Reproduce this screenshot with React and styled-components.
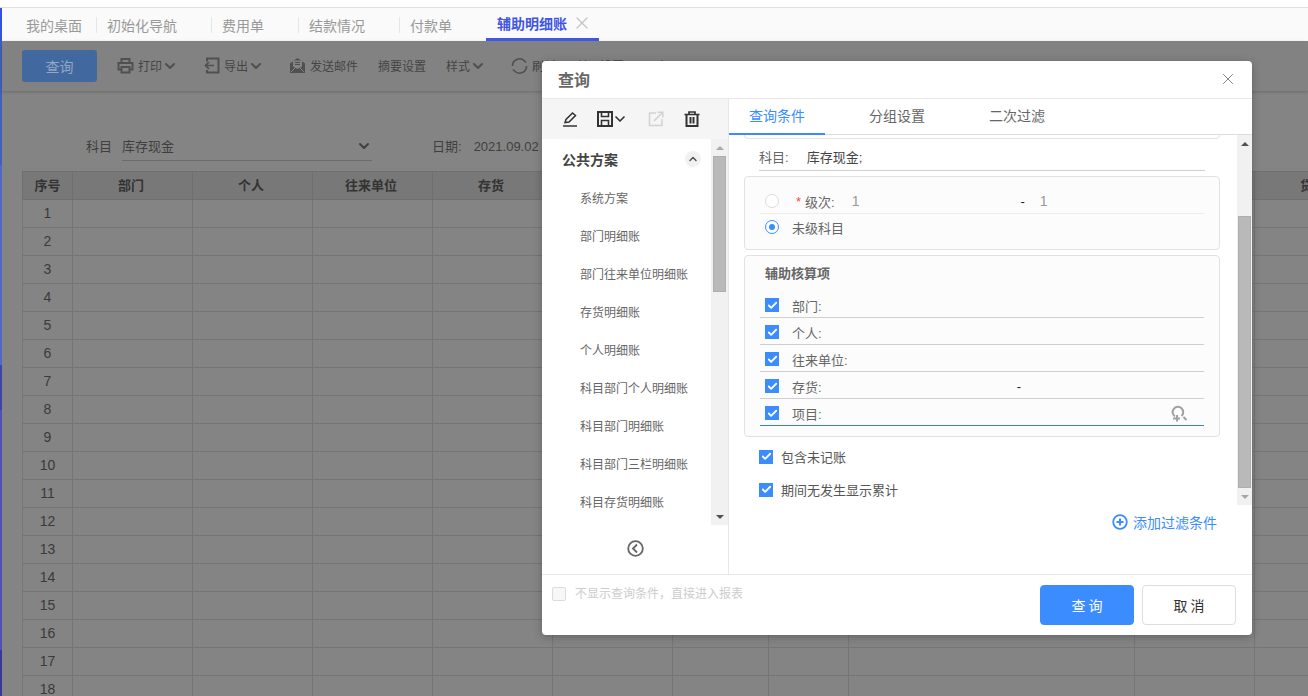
import React from 'react'
import styled, { createGlobalStyle } from 'styled-components'
import { ChevronDown, ChevronUp, X, Check } from 'lucide-react'

const GlobalStyle = createGlobalStyle`
  html, body {
    margin: 0;
    padding: 0;
    height: 100%;
    overflow: hidden;
    background: #fff;
    font-family: "Liberation Sans", "Noto Sans CJK SC", sans-serif;
  }
  * { box-sizing: border-box; }
`

const Page = styled.div`
  position: relative;
  width: 1308px;
  height: 696px;
  overflow: hidden;
  display: flex;
  flex-direction: column;
  padding-left: 2px;
  background: linear-gradient(
    #3355dd 0 41px,
    #4060c0 41px 165px,
    #5068c8 165px 365px,
    #3f44a8 365px 410px,
    #5050b8 410px 650px,
    #38389a 650px
  );
`
const TopEdge = styled.div`
  height: 8px;
  flex: none;
  margin-left: -2px;
  background: #fff;
  border-bottom: 1px solid #e0e0e0;
`
const TabBar = styled.div`
  height: 33px;
  flex: none;
  display: flex;
  background: #fafafa;
`
const Tab = styled.div`
  height: 33px;
  padding: ${p => p.$first ? '0 14px 0 24px' : '0 34px 0 11px'};
  position: relative;
  display: flex;
  align-items: center;
  font-size: 14px;
  color: #999;
  white-space: nowrap;
  &::before {
    content: ${p => p.$first ? 'none' : '""'};
    position: absolute;
    left: 0;
    top: 9px;
    height: 16px;
    width: 1px;
    background: #e6e6e6;
  }
`
const ActiveTab = styled(Tab)`
  padding: 0 11px;
  gap: 6px;
  color: #3f55e4;
  font-weight: 600;
  border-bottom: 3px solid #3f55e4;
  &::before { content: none; }
  svg { color: #c4c4c4; margin: 0 -4px 0 -1px; }
`
const Content = styled.div`
  flex: 1;
  min-height: 0;
  background: #848484;
  display: flex;
  flex-direction: column;
  box-shadow: inset 0 1px 0 #b8b8b8;
`
const Toolbar = styled.div`
  height: 50px;
  flex: none;
  background: #828282;
  box-shadow: 0 1px 3px rgba(0, 0, 0, 0.2);
  display: flex;
  align-items: center;
  padding-left: 20px;
  font-size: 12px;
  color: #454545;
  white-space: nowrap;
`
const QueryBtn = styled.div`
  width: 75px;
  height: 32px;
  border-radius: 3px;
  background: #41689f;
  color: #93a7c4;
  font-size: 14px;
  display: flex;
  align-items: center;
  justify-content: center;
  margin-right: 20px;
  padding-bottom: 1px;
`
const ToolItem = styled.div`
  display: flex;
  align-items: center;
  gap: 4px;
  margin-right: ${p => p.$mr ?? 20}px;
  padding-bottom: 1px;
  svg { flex: none; }
`
const ToolChevron = styled(ChevronDown)`
  margin: 0 1px 0 -4px;
  color: #505050;
`
const FilterRow = styled.div`
  height: 80px;
  flex: none;
  display: flex;
  align-items: flex-start;
  padding: 44px 0 0 84px;
  font-size: 13px;
  color: #3f3f3f;
`
const FilterLabel = styled.span`
  line-height: 24px;
  width: 36px;
`
const SelectBox = styled.div`
  width: 250px;
  height: 26px;
  border-bottom: 1px solid #6c6c6c;
  display: flex;
  align-items: center;
  justify-content: space-between;
  padding: 0 0 4px 0;
  margin-right: 60px;
`
const DateLabel = styled.span`
  line-height: 24px;
  margin-right: 12px;
  white-space: nowrap;
`
const Grid = styled.table`
  border-collapse: collapse;
  table-layout: fixed;
  width: 1352px;
  margin-left: 20px;
  flex: none;
  font-size: 14px;
  color: #333;
  th {
    height: 28px;
    padding: 0 0 2px;
    background: #787878;
    border: 1px solid #6f6f6f;
    font-weight: 700;
    font-size: 13px;
  }
  th:not(:first-child) { padding-right: 3px; }
  td {
    height: 28px;
    padding: 0 0 2px;
    border: 1px solid #757575;
    text-align: center;
    color: #3a3a3a;
    font-size: 14px;
  }
`

const Modal = styled.div`
  position: absolute;
  left: 542px;
  top: 61px;
  width: 710px;
  height: 574px;
  background: #fff;
  border-radius: 4px;
  display: flex;
  flex-direction: column;
  overflow: hidden;
  box-shadow: 0 2px 8px rgba(0, 0, 0, 0.25);
`
const ModalHead = styled.div`
  height: 38px;
  flex: none;
  display: flex;
  align-items: center;
  justify-content: space-between;
  padding: 0 15px 2px 16px;
  border-bottom: 1px solid #e8e8e8;
  font-size: 16px;
  font-weight: 700;
  color: #666;
  svg { color: #808080; }
`
const ModalBody = styled.div`
  flex: 1;
  min-height: 0;
  display: flex;
  border-bottom: 1px solid #e8e8e8;
`
const Side = styled.div`
  width: 187px;
  flex: none;
  display: flex;
  flex-direction: column;
  border-right: 1px solid #e8e8e8;
`
const SideTools = styled.div`
  height: 40px;
  flex: none;
  background: #f5f5f5;
  display: flex;
  align-items: center;
  padding-left: 20px;
  svg { flex: none; }
`
const SideIcon = styled.span`
  display: flex;
  align-items: center;
  margin-right: ${p => p.$mr ?? 0}px;
`
const SaveChevron = styled(ChevronDown)`
  margin-left: -1px;
  color: #333;
`
const SideScroll = styled.div`
  height: 386px;
  flex: none;
  display: flex;
`
const SchemeList = styled.div`
  flex: 1;
  padding: 10px 10px 0 20px;
  overflow: hidden;
`
const SchemeHead = styled.div`
  height: 20px;
  display: flex;
  align-items: center;
  justify-content: space-between;
  font-size: 14px;
  font-weight: 700;
  color: #444;
  margin-bottom: 11px;
`
const CollapseDot = styled.span`
  width: 16px;
  height: 16px;
  border-radius: 50%;
  background: #f1f1f1;
  color: #555;
  display: flex;
  align-items: center;
  justify-content: center;
`
const SchemeItem = styled.div`
  height: 38px;
  line-height: 38px;
  padding-left: 18px;
  font-size: 12px;
  color: #666;
  white-space: nowrap;
`
const ScrollTrack = styled.div`
  width: ${p => p.$w}px;
  flex: none;
  background: #f1f1f1;
  display: flex;
  flex-direction: column;
  align-items: center;
`
const Arrow = styled.span`
  flex: none;
  height: ${p => p.$h}px;
  display: flex;
  align-items: center;
  justify-content: center;
  width: 100%;
  &::after {
    content: "";
    border-left: 4px solid transparent;
    border-right: 4px solid transparent;
    ${p => p.$up ? `border-bottom: 4px solid ${p.$c};` : `border-top: 4px solid ${p.$c};`}
  }
`
const Thumb = styled.div`
  flex: none;
  width: ${p => p.$w}px;
  height: ${p => p.$h}px;
  margin-top: ${p => p.$top}px;
  margin-bottom: auto;
  background: #b9b9b9;
  border: 1px solid #aeaeae;
`
const SideFoot = styled.div`
  flex: 1;
  display: flex;
  align-items: center;
  justify-content: center;
  color: #666;
  padding-bottom: 3px;
`
const Main = styled.div`
  flex: 1;
  min-width: 0;
  display: flex;
  flex-direction: column;
`
const MainTabs = styled.div`
  height: 36px;
  flex: none;
  display: flex;
  border-bottom: 1px solid #dcdcdc;
  font-size: 14px;
  color: #666;
`
const MainTab = styled.div`
  height: 36px;
  padding: 0 20px;
  margin-right: 24px;
  line-height: 35px;
  color: ${p => p.$active ? '#3a8cff' : '#666'};
  border-bottom: ${p => p.$active ? '2px solid #3a8cff' : '0'};
`
const FormWrap = styled.div`
  height: 370px;
  flex: none;
  display: flex;
`
const Form = styled.div`
  flex: 1;
  min-width: 0;
  padding: 0 17px 0 15px;
  overflow: hidden;
  font-size: 13px;
  color: #666;
`
const CutCard = styled.div`
  height: 4px;
  border: 1px solid #e4e4e4;
  border-top: 0;
  border-radius: 0 0 4px 4px;
`
const SubjectLine = styled.div`
  height: 32px;
  margin: 0 15px 5px;
  border-bottom: 1px solid #cfcfcf;
  display: flex;
  align-items: center;
  padding-top: 4px;
  b { font-weight: 400; color: #444; margin-left: 18px; }
`
const Card = styled.div`
  background: #fcfcfc;
  border: 1px solid #e2e2e2;
  border-radius: 4px;
  margin-bottom: 5px;
  height: ${p => p.$h}px;
  padding: ${p => p.$pad};
`
const LevelRow = styled.div`
  height: ${p => p.$h}px;
  display: flex;
  align-items: center;
  padding-left: 5px;
  border-bottom: ${p => p.$line ? '1px solid #ececec' : '0'};
`
const Radio = styled.span`
  width: 14px;
  height: 14px;
  flex: none;
  border-radius: 50%;
  border: 1px solid ${p => p.$on ? '#3a8cff' : '#dcdcdc'};
  background: #fff;
  margin-right: ${p => p.$mr}px;
  display: flex;
  align-items: center;
  justify-content: center;
  &::after {
    content: ${p => p.$on ? '""' : 'none'};
    width: 6px;
    height: 6px;
    border-radius: 50%;
    background: #3a8cff;
  }
`
const Star = styled.span`
  color: #f44;
  margin-right: 4px;
`
const LevelValue = styled.span`
  color: #999;
  font-size: 14px;
  margin-left: ${p => p.$ml}px;
`
const Dash = styled.span`
  color: #222;
  margin-left: ${p => p.$ml}px;
`
const CardTitle = styled.div`
  height: 20px;
  line-height: 20px;
  padding-left: 5px;
  font-weight: 700;
  color: #666;
  margin-bottom: 7px;
`
const AssistRow = styled.div`
  height: 27px;
  display: flex;
  align-items: center;
  padding: 2px 16px 0 5px;
  border-bottom: 1px solid ${p => p.$focus ? '#3a7fdd' : '#cfcfcf'};
`
const Tick = styled.span`
  width: 14px;
  height: 14px;
  flex: none;
  background: #3a8cff;
  color: #fff;
  display: flex;
  align-items: center;
  justify-content: center;
  margin-right: ${p => p.$mr}px;
`
const CheckLine = styled.div`
  height: 33px;
  display: flex;
  align-items: center;
  padding: 0 0 4px 15px;
  color: #555;
`
const Spacer = styled.span`
  flex: 1;
`
const AddRow = styled.div`
  flex: 1;
  display: flex;
  justify-content: flex-end;
  padding: 9px 35px 0 0;
  font-size: 14px;
  color: #3a8cff;
  gap: 5px;
  line-height: 18px;
`
const ModalFoot = styled.div`
  height: 60px;
  flex: none;
  display: flex;
  padding: 10px 16px 0 10px;
  gap: 8px;
`
const NoShow = styled.div`
  flex: 1;
  display: flex;
  align-items: flex-start;
  padding-top: 2px;
  font-size: 12px;
  color: #ccc;
  gap: 9px;
  line-height: 14px;
`
const EmptyBox = styled.span`
  width: 14px;
  height: 14px;
  border: 1px solid #dcdcdc;
  border-radius: 2px;
  background: #f7f7f7;
`
const Btn = styled.div`
  width: 94px;
  height: 40px;
  border-radius: 4px;
  font-size: 14px;
  letter-spacing: 3px;
  padding-left: 3px;
  display: flex;
  align-items: center;
  justify-content: center;
  background: ${p => p.$primary ? '#3a8cff' : '#fff'};
  color: ${p => p.$primary ? '#fff' : '#333'};
  border: 1px solid ${p => p.$primary ? '#3a8cff' : '#dedede'};
`

const PrintIcon = () => (
  <svg width="17" height="17" viewBox="0 0 17 17" fill="none" stroke="#505050" strokeWidth="2">
    <path d="M4.500 5V2h8v3M4.500 12.500H1.500V6h14v6.500h-3" />
    <path d="M4.500 10h8v5.500h-8z" />
  </svg>
)
const ExportIcon = () => (
  <svg width="16" height="17" viewBox="0 0 16 17" fill="none" stroke="#505050" strokeWidth="2">
    <path d="M3 4.500V1.500h11.500v14H3V13" />
    <path d="M10 8.500H1.500M5 5 1.500 8.500 5 12" strokeWidth="1.700" />
  </svg>
)
const MailIcon = () => (
  <svg width="17" height="17" viewBox="0 0 17 17">
    <path d="M1 6.500 8.500 1 16 6.500V16H1z" fill="#505050" />
    <path d="M4 3.500h9v6L8.500 12 4 9.500z" fill="#848484" />
    <path d="M6 5.500h5M6 7.500h5" stroke="#505050" strokeWidth="1" />
    <path d="M2 15l4.500-4.500M15 15l-4.500-4.500" stroke="#848484" strokeWidth="1" />
  </svg>
)
const RefreshIcon = () => (
  <svg width="17" height="18" viewBox="0 0 17 18" fill="none" stroke="#505050" strokeWidth="1.600">
    <path d="M1.500 9a7 7 0 0 1 12-5l1.500 1.500" />
    <path d="M15.500 9a7 7 0 0 1-12 5L2 12.500" />
  </svg>
)
const PenIcon = () => (
  <svg width="16" height="16" viewBox="0 0 16 16" fill="none" stroke="#333" strokeWidth="1.500">
    <path d="M3 11.500 4 8.500 10.500 2l3 2.500-6.500 6.500z" />
    <path d="M1 15h14" strokeWidth="1.700" />
  </svg>
)
const SaveIcon = () => (
  <svg width="16" height="16" viewBox="0 0 16 16" fill="none" stroke="#333" strokeWidth="2">
    <path d="M1 1h14v14H1z" />
    <path d="M4.500 1v4.500h7V1M4.500 15V9.500h7V15" strokeWidth="1.600" />
  </svg>
)
const ShareIcon = () => (
  <svg width="16" height="16" viewBox="0 0 16 16" fill="none" stroke="#d2d2d2" strokeWidth="1.500">
    <path d="M8 2H1.500v12.500H14V8" />
    <path d="M6 10 14.500 1.500M9.500 1.200h5.300v5.300" />
  </svg>
)
const TrashIcon = () => (
  <svg width="16" height="16" viewBox="0 0 16 16" fill="none" stroke="#333" strokeWidth="2">
    <path d="M0.500 3.500h15M5 3.500V1h6v2.500" strokeWidth="1.700" />
    <path d="M2.500 3.500V15h11V3.500M6.500 6v6.500M9.500 6v6.500" />
  </svg>
)
const BackIcon = () => (
  <svg width="17" height="17" viewBox="0 0 17 17" fill="none" stroke="#666" strokeWidth="1.800">
    <circle cx="8.500" cy="8.500" r="7.300" />
    <path d="M10 4.500 6 8.500l4 4" />
  </svg>
)
const PersonSearchIcon = () => (
  <svg width="17" height="17" viewBox="0 0 17 17" fill="none" stroke="#a0a0a0" strokeWidth="2">
    <path d="M4 11.500A5.300 5.300 0 1 1 10.500 11" />
    <path d="M12.500 12l3 3M6 10v6.500M2 13.500h7" />
  </svg>
)
const PlusCircleIcon = () => (
  <svg width="16" height="16" viewBox="0 0 16 16" fill="none" stroke="#3a8cff" strokeWidth="1.800">
    <circle cx="8" cy="8" r="6.800" />
    <path d="M4.500 8h7M8 4.500v7" strokeWidth="2" />
  </svg>
)

const tabs = ['初始化导航', '费用单', '结款情况', '付款单']
const columns = [
  ['序号', 50], ['部门', 120], ['个人', 120], ['往来单位', 120], ['存货', 120],
  ['项目', 120], ['科目', 96], ['摘要', 80], ['凭证', 286], ['借方', 120], ['贷方', 120],
]
const rows = Array.from({ length: 18 }, (_, i) => i + 1)
const schemes = [
  '系统方案', '部门明细账', '部门往来单位明细账', '存货明细账', '个人明细账',
  '科目部门个人明细账', '科目部门明细账', '科目部门三栏明细账', '科目存货明细账',
]
const assists = ['部门', '个人', '往来单位', '存货', '项目']

const Checked = ({ mr }) => (
  <Tick $mr={mr}><Check size={11} strokeWidth={4} /></Tick>
)

export default function App() {
  return (
    <Page>
      <GlobalStyle />
      <TopEdge />
      <TabBar>
        <Tab $first>我的桌面</Tab>
        {tabs.map(t => <Tab key={t}>{t}</Tab>)}
        <ActiveTab>辅助明细账<X size={20} strokeWidth={1.5} /></ActiveTab>
      </TabBar>

      <Content>
        <Toolbar>
          <QueryBtn>查询</QueryBtn>
          <ToolItem $mr={25}><PrintIcon />打印<ToolChevron size={16} strokeWidth={3} /></ToolItem>
          <ToolItem $mr={24}><ExportIcon />导出<ToolChevron size={16} strokeWidth={3} /></ToolItem>
          <ToolItem><MailIcon />发送邮件</ToolItem>
          <ToolItem>摘要设置</ToolItem>
          <ToolItem $mr={24}>样式<ToolChevron size={16} strokeWidth={3} /></ToolItem>
          <ToolItem><RefreshIcon />刷新</ToolItem>
          <ToolItem>科目设置</ToolItem>
          <ToolItem>退出</ToolItem>
        </Toolbar>

        <FilterRow>
          <FilterLabel>科目</FilterLabel>
          <SelectBox>库存现金<ChevronDown size={16} strokeWidth={3} /></SelectBox>
          <DateLabel>日期:</DateLabel>
          <DateLabel>2021.09.02 -</DateLabel>
        </FilterRow>

        <Grid>
          <colgroup>
            {columns.map(([name, width]) => <col key={name} width={width} />)}
          </colgroup>
          <thead>
            <tr>{columns.map(([name]) => <th key={name}>{name}</th>)}</tr>
          </thead>
          <tbody>
            {rows.map(n => (
              <tr key={n}>
                <td>{n}</td>
                {columns.slice(1).map(([name]) => <td key={name} />)}
              </tr>
            ))}
          </tbody>
        </Grid>
      </Content>

      <Modal>
        <ModalHead>查询<X size={18} strokeWidth={1.3} /></ModalHead>
        <ModalBody>
          <Side>
            <SideTools>
              <SideIcon $mr={19}><PenIcon /></SideIcon>
              <SideIcon $mr={20}><SaveIcon /><SaveChevron size={16} strokeWidth={2.5} /></SideIcon>
              <SideIcon $mr={20}><ShareIcon /></SideIcon>
              <SideIcon><TrashIcon /></SideIcon>
            </SideTools>
            <SideScroll>
              <SchemeList>
                <SchemeHead>
                  公共方案
                  <CollapseDot><ChevronUp size={12} strokeWidth={3} /></CollapseDot>
                </SchemeHead>
                {schemes.map(s => <SchemeItem key={s}>{s}</SchemeItem>)}
              </SchemeList>
              <ScrollTrack $w={17}>
                <Arrow $up $h={17} $c="#a8a8a8" />
                <Thumb $w={13} $h={136} $top={0} />
                <Arrow $h={17} $c="#505050" />
              </ScrollTrack>
            </SideScroll>
            <SideFoot><BackIcon /></SideFoot>
          </Side>

          <Main>
            <MainTabs>
              <MainTab $active>查询条件</MainTab>
              <MainTab>分组设置</MainTab>
              <MainTab>二次过滤</MainTab>
            </MainTabs>
            <FormWrap>
              <Form>
                <CutCard />
                <SubjectLine>科目:<b>库存现金;</b></SubjectLine>
                <Card $h={74} $pad="12px 15px 0">
                  <LevelRow $h={25} $line>
                    <Radio $mr={17} />
                    <Star>*</Star>级次:
                    <LevelValue $ml={17}>1</LevelValue>
                    <Dash $ml={161}>-</Dash>
                    <LevelValue $ml={15}>1</LevelValue>
                  </LevelRow>
                  <LevelRow $h={26}>
                    <Radio $on $mr={13} />未级科目
                  </LevelRow>
                </Card>
                <Card $h={182} $pad="8px 15px 0">
                  <CardTitle>辅助核算项</CardTitle>
                  {assists.map((a, i) => (
                    <AssistRow key={a} $focus={i === 4}>
                      <Checked mr={13} />{a}:
                      {i === 3 && <Dash $ml={195}>-</Dash>}
                      {i === 4 && <><Spacer /><PersonSearchIcon /></>}
                    </AssistRow>
                  ))}
                </Card>
                <CheckLine><Checked mr={8} />包含未记账</CheckLine>
                <CheckLine><Checked mr={8} />期间无发生显示累计</CheckLine>
              </Form>
              <ScrollTrack $w={15}>
                <Arrow $up $h={17} $c="#505050" />
                <Thumb $w={13} $h={272} $top={64} />
                <Arrow $h={17} $c="#a8a8a8" />
              </ScrollTrack>
            </FormWrap>
            <AddRow><PlusCircleIcon />添加过滤条件</AddRow>
          </Main>
        </ModalBody>
        <ModalFoot>
          <NoShow><EmptyBox />不显示查询条件，直接进入报表</NoShow>
          <Btn $primary>查询</Btn>
          <Btn>取消</Btn>
        </ModalFoot>
      </Modal>
    </Page>
  )
}
